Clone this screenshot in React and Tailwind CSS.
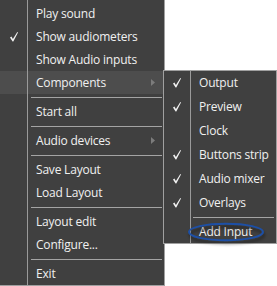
import React from "react";

const Check = () => (
  <svg width="8" height="10" viewBox="0 0 8 10" className="block">
    <path d="M0 5.6 L1.4 4.6 L2.9 7.1 L7.3 0 L8 0.6 L3.3 9.6 L2.6 9.6 Z" fill="#f2f2f2" />
  </svg>
);

const Arrow = () => (
  <svg width="4" height="7" viewBox="0 0 4 7" className="block">
    <path d="M0 0 L4 3.5 L0 7 Z" fill="#7c7c7c" />
  </svg>
);

function Row({ label, checked, sub, highlight, h, gutter }) {
  return (
    <div className={`flex ${h} ${highlight ? "bg-[#4d4d4d]" : ""}`}>
      <div className={`${gutter} shrink-0 border-r border-[#9a9a9a] flex items-center justify-center`}>
        {checked ? <Check /> : null}
      </div>
      <div className="flex-1 flex items-center pl-[8px]">
        <span className="text-[12px] leading-none text-[#f0f0f0] tracking-[-0.2px]">{label}</span>
        {sub ? (
          <span className="ml-auto mr-[9px]">
            <Arrow />
          </span>
        ) : null}
      </div>
    </div>
  );
}

function Sep({ h, gutter, ml, mr, top }) {
  return (
    <div className={`flex ${h}`}>
      <div className={`${gutter} shrink-0 border-r border-[#9a9a9a]`} />
      <div className={`flex-1 ${ml} ${mr} ${top}`}>
        <div className="h-px bg-[#a4a4a4]" />
      </div>
    </div>
  );
}

export default function App() {
  const mg = "w-[28px]";
  const sg = "w-[27px]";
  const mrow = "h-[23px]";
  const msep = (k) => <Sep key={k} h="h-[6px]" gutter={mg} ml="ml-[3px]" mr="mr-[2px]" top="pt-[3px]" />;
  return (
    <div
      className="relative w-[277px] h-[286px] bg-white overflow-hidden"
      style={{ fontFamily: '"Open Sans", "Noto Sans", sans-serif' }}
    >
      <div className="w-[165px] h-[286px] bg-[#404040] border-r border-b border-[#a0a0a0] flex flex-col">
        <div className="flex h-[2px]">
          <div className={`${mg} border-r border-[#9a9a9a]`} />
        </div>
        <Row h={mrow} gutter={mg} label="Play sound" />
        <Row h={mrow} gutter={mg} label="Show audiometers" checked />
        <Row h={mrow} gutter={mg} label="Show Audio inputs" />
        <Row h={mrow} gutter={mg} label="Components" sub highlight />
        {msep(1)}
        <Row h={mrow} gutter={mg} label="Start all" />
        {msep(2)}
        <Row h={mrow} gutter={mg} label="Audio devices" sub />
        {msep(3)}
        <Row h={mrow} gutter={mg} label="Save Layout" />
        <Row h={mrow} gutter={mg} label="Load Layout" />
        {msep(4)}
        <Row h={mrow} gutter={mg} label="Layout edit" />
        <Row h={mrow} gutter={mg} label="Configure..." />
        {msep(5)}
        <Row h={mrow} gutter={mg} label="Exit" />
      </div>

      <div className="absolute left-[163px] top-[70px] w-[114px] bg-[#404040] border border-[#a0a0a0] flex flex-col">
        <Row h="h-[24px]" gutter={sg} label="Output" checked />
        <Row h="h-[24px]" gutter={sg} label="Preview" checked />
        <Row h="h-[24px]" gutter={sg} label="Clock" />
        <Row h="h-[24px]" gutter={sg} label="Buttons strip" checked />
        <Row h="h-[24px]" gutter={sg} label="Audio mixer" checked />
        <Row h="h-[24px]" gutter={sg} label="Overlays" checked />
        <Sep h="h-[5px]" gutter={sg} ml="ml-[2px]" mr="mr-[2px]" top="pt-[2px]" />
        <Row h="h-[23px]" gutter={sg} label="Add Input" />
      </div>

      <svg className="absolute left-0 top-0 pointer-events-none" width="277" height="286" viewBox="0 0 277 286">
        <defs>
          <filter id="sh" x="-20%" y="-50%" width="140%" height="220%">
            <feDropShadow dx="1" dy="3" stdDeviation="1.6" floodColor="#000" floodOpacity="0.45" />
          </filter>
        </defs>
        <ellipse cx="226" cy="232" rx="37" ry="8.3" fill="none" stroke="#1d4fa6" strokeWidth="2" filter="url(#sh)" />
      </svg>
    </div>
  );
}
